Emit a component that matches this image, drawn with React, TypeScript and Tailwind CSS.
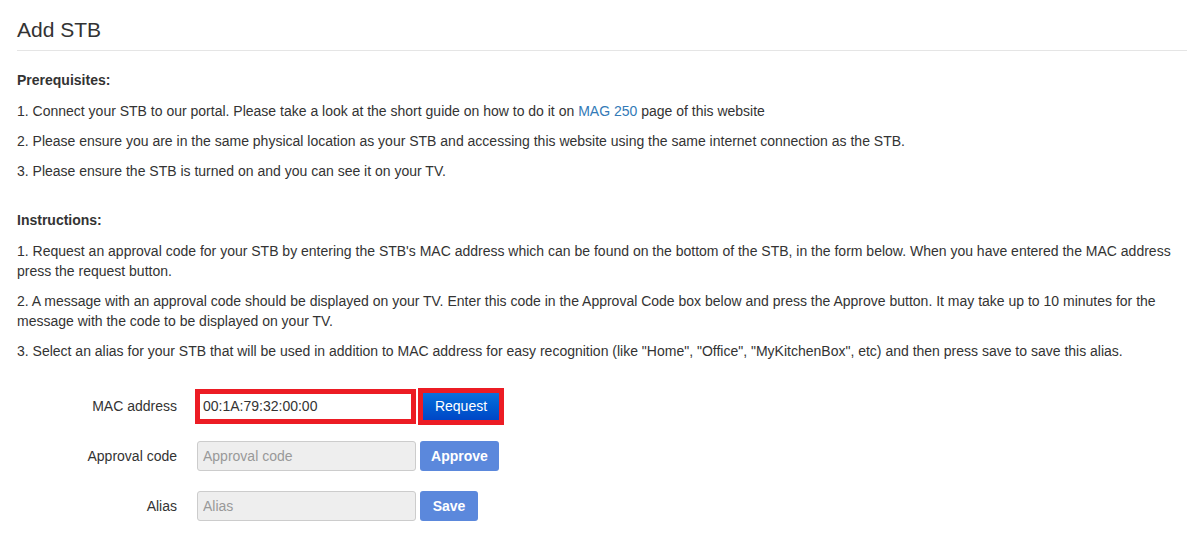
import React from "react";

const font = { fontFamily: '"Liberation Sans", Arial, sans-serif' };

function FormRow({ label, children }: { label: string; children: React.ReactNode }) {
  return (
    <div className="flex items-center h-[30px]">
      <label className="w-[160px] text-right text-[14px] text-[#333]">{label}</label>
      <div className="ml-[21px] flex items-center">{children}</div>
    </div>
  );
}

export default function App() {
  return (
    <div className="bg-white min-h-screen pl-[17px] pr-[10px] text-[14px] leading-[20px] text-[#333]" style={font}>
      <div className="pt-[19px] pb-[9px] border-b border-[#e5e5e5]">
        <h3 className="text-[21px] leading-[22px] text-[#333]">Add STB</h3>
      </div>

      <div className="mt-[19px]">
        <p className="font-bold mb-[11px]">Prerequisites:</p>
        <p className="mb-[10px]">
          1. Connect your STB to our portal. Please take a look at the short guide on how to do it on{" "}
          <a className="text-[#337ab7]" href="#">MAG 250</a> page of this website
        </p>
        <p className="mb-[10px]">
          2. Please ensure you are in the same physical location as your STB and accessing this website using the same internet connection as the STB.
        </p>
        <p className="mb-[10px]">3. Please ensure the STB is turned on and you can see it on your TV.</p>
      </div>

      <div className="mt-[29px]">
        <p className="font-bold mb-[11px]">Instructions:</p>
        <p className="mb-[10px]">
          1. Request an approval code for your STB by entering the STB's MAC address which can be found on the bottom of the STB, in the form below. When you have entered the MAC address press the request button.
        </p>
        <p className="mb-[10px]">
          2. A message with an approval code should be displayed on your TV. Enter this code in the Approval Code box below and press the Approve button. It may take up to 10 minutes for the message with the code to be displayed on your TV.
        </p>
        <p className="mb-[10px]">
          3. Select an alias for your STB that will be used in addition to MAC address for easy recognition (like "Home", "Office", "MyKitchenBox", etc) and then press save to save this alias.
        </p>
      </div>

      <div className="mt-[30px] flex flex-col gap-[20px]">
        <FormRow label="MAC address">
          <div className="-ml-[3px] w-[221px] h-[35px] border-[5px] border-[#ec1c24] bg-white flex items-center pl-[3px] text-[14px] text-[#333]">
            00:1A:79:32:00:00
          </div>
          <div className="ml-[2px] w-[86px] h-[37px] border-[5px] border-[#ec1c24] flex">
            <button className="flex-1 bg-gradient-to-b from-[#0b70dc] to-[#0046c6] text-white text-[14px] leading-[20px]">
              Request
            </button>
          </div>
        </FormRow>
        <FormRow label="Approval code">
          <input
            disabled
            placeholder="Approval code"
            className="-ml-[1px] w-[219px] h-[30px] rounded-[3px] border border-[#ccc] bg-[#eee] px-[5px] text-[14px] placeholder:text-[#999]"
          />
          <button className="ml-[4px] w-[79px] h-[30px] rounded-[3px] bg-[#5b88dc] text-white font-bold text-[14px]">
            Approve
          </button>
        </FormRow>
        <FormRow label="Alias">
          <input
            disabled
            placeholder="Alias"
            className="-ml-[1px] w-[219px] h-[30px] rounded-[3px] border border-[#ccc] bg-[#eee] px-[5px] text-[14px] placeholder:text-[#999]"
          />
          <button className="ml-[4px] w-[58px] h-[30px] rounded-[3px] bg-[#5b88dc] text-white font-bold text-[14px]">
            Save
          </button>
        </FormRow>
      </div>
    </div>
  );
}
